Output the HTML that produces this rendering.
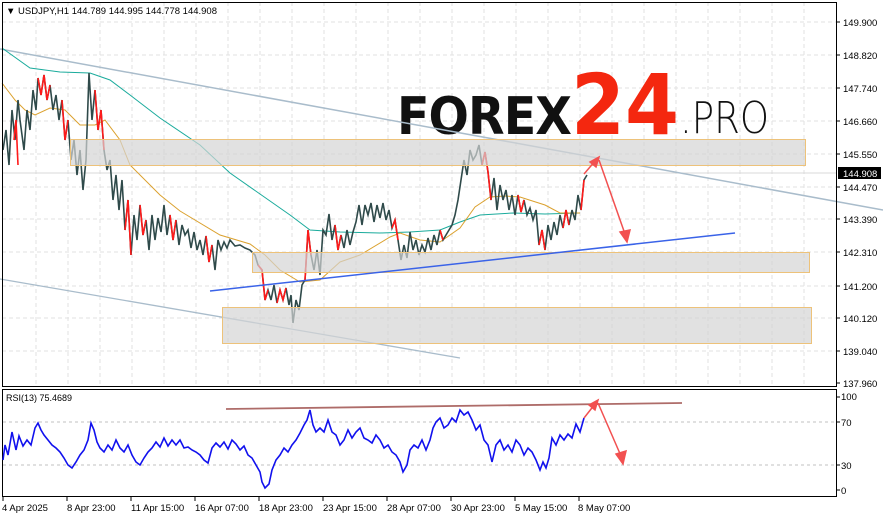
<!DOCTYPE html>
<html><head><meta charset="utf-8"><style>
html,body{margin:0;padding:0;background:#fff;width:883px;height:518px;overflow:hidden}
svg{display:block}
text{font-family:"Liberation Sans",sans-serif}
</style></head><body>
<svg width="883" height="518" viewBox="0 0 883 518" xmlns="http://www.w3.org/2000/svg">
<rect width="883" height="518" fill="#fff"/>
<!-- grid main -->
<g stroke="#e2e2e2" stroke-dasharray="4,3" stroke-width="1">
<line x1="2" y1="22" x2="836" y2="22"/><line x1="2" y1="55" x2="836" y2="55"/><line x1="2" y1="88" x2="836" y2="88"/><line x1="2" y1="121" x2="836" y2="121"/><line x1="2" y1="154" x2="836" y2="154"/><line x1="2" y1="187" x2="836" y2="187"/><line x1="2" y1="219" x2="836" y2="219"/><line x1="2" y1="252" x2="836" y2="252"/><line x1="2" y1="286" x2="836" y2="286"/><line x1="2" y1="318" x2="836" y2="318"/><line x1="2" y1="351" x2="836" y2="351"/>
<line x1="36" y1="2" x2="36" y2="386"/><line x1="68" y1="2" x2="68" y2="386"/><line x1="100" y1="2" x2="100" y2="386"/><line x1="132" y1="2" x2="132" y2="386"/><line x1="164" y1="2" x2="164" y2="386"/><line x1="196" y1="2" x2="196" y2="386"/><line x1="228" y1="2" x2="228" y2="386"/><line x1="260" y1="2" x2="260" y2="386"/><line x1="292" y1="2" x2="292" y2="386"/><line x1="324" y1="2" x2="324" y2="386"/><line x1="356" y1="2" x2="356" y2="386"/><line x1="388" y1="2" x2="388" y2="386"/><line x1="420" y1="2" x2="420" y2="386"/><line x1="452" y1="2" x2="452" y2="386"/><line x1="484" y1="2" x2="484" y2="386"/><line x1="516" y1="2" x2="516" y2="386"/><line x1="548" y1="2" x2="548" y2="386"/><line x1="580" y1="2" x2="580" y2="386"/><line x1="612" y1="2" x2="612" y2="386"/><line x1="644" y1="2" x2="644" y2="386"/><line x1="676" y1="2" x2="676" y2="386"/><line x1="708" y1="2" x2="708" y2="386"/><line x1="740" y1="2" x2="740" y2="386"/><line x1="772" y1="2" x2="772" y2="386"/><line x1="804" y1="2" x2="804" y2="386"/>
</g>
<line x1="2" y1="173" x2="836" y2="173" stroke="#d8d8d8"/>
<!-- logo -->
<text x="397" y="134" font-size="52" font-weight="900" fill="#111" letter-spacing="-1" style="font-family:'DejaVu Sans',sans-serif" textLength="174" lengthAdjust="spacingAndGlyphs">FOREX</text>
<text x="571" y="134" font-size="84" font-weight="900" fill="#f4270f" style="font-family:'DejaVu Sans',sans-serif" textLength="108" lengthAdjust="spacingAndGlyphs">24</text>
<text x="680" y="133" font-size="44" fill="#111" style="font-family:'DejaVu Sans ExtraLight','DejaVu Sans',sans-serif" font-weight="200" textLength="89" lengthAdjust="spacingAndGlyphs">.PRO</text>
<!-- channel lines -->
<line x1="0" y1="49" x2="883" y2="210" stroke="#a9bccb" stroke-width="1.5"/>
<line x1="0" y1="279" x2="460" y2="358" stroke="#a9bccb" stroke-width="1.3"/>
<!-- MAs -->
<polyline fill="none" stroke="#1aab9c" stroke-width="1" points="2,48 30,68 60,72 90,73 110,80 130,95 160,118 200,145 230,173 260,194 290,215 310,230 340,232 380,233 410,232 440,230 460,222 480,215 513,213 545,214 580,213"/>
<polyline fill="none" stroke="#dba12e" stroke-width="1" points="2,83 15,100 25,110 35,115 50,108 65,110 80,125 95,125 105,120 120,140 130,165 160,195 180,211 220,235 250,244 265,255 280,270 300,282 320,280 340,262 360,255 390,237 400,233 420,240 440,242 460,228 475,207 490,197 505,196 520,197 545,205 560,213 580,213"/>
<!-- price -->
<polyline fill="none" stroke="#2f4a4a" stroke-width="1.6" points="3,150 6,130 9,165 12,110 15,140 18,100 20,120 24,150 27,110 30,130 33,90 36,110 38,78 41,95 44,75 47,100 50,85 53,110 56,95 59,120 62,100 65,140 68,120 71,160 74,140 77,175 80,150 83,190 86,160 89,73 92,120 95,90 98,130 101,110 104,150 107,170 110,160 113,200 116,175 119,210 122,180 125,230 128,200 131,255 134,215 137,240 140,205 143,235 146,220 149,250 152,215 155,240 158,218 161,232 164,205 167,235 170,215 173,240 176,220 179,245 182,225 185,235 188,230 191,248 194,232 197,250 200,240 203,255 206,236 209,262 212,245 215,270 218,240 221,250 224,242 227,248 230,240 235,246 240,245 245,248 250,250 255,255 258,265 262,270 265,300 268,290 271,300 274,285 277,303 280,290 283,300 286,288 289,305 291,295 293,323 296,300 299,310 302,285 305,280 308,230 311,255 314,270 317,250 320,275 323,230 326,235 329,214 332,240 335,225 338,250 341,235 344,248 347,230 350,245 353,232 356,222 359,205 362,225 365,205 368,215 371,203 374,222 377,205 380,218 383,203 386,220 389,210 392,228 395,220 398,240 401,260 404,245 407,258 410,232 413,250 416,240 419,255 422,245 425,252 428,238 431,250 434,235 437,245 440,230 443,240 446,235 449,230 452,225 455,215 458,200 461,180 464,160 467,175 470,150 473,160 476,155 479,145 482,165 485,152 488,172 491,200 494,178 497,210 500,185 503,200 506,190 509,210 512,195 515,215 518,195 521,212 524,200 527,215 530,208 533,220 536,210 539,245 542,230 545,250 548,225 551,240 554,222 557,235 560,215 563,228 566,210 569,225 572,210 575,220 578,195 581,210 584,180 587,175"/>
<g stroke="#ff1a1a" stroke-width="1.6" fill="none">
<polyline points="38,78 41,95 44,75 47,100 50,85"/><polyline points="62,100 65,140 68,120"/><polyline points="95,90 98,130 101,110 104,150"/><polyline points="125,230 128,200 131,255"/><polyline points="170,215 173,240 176,220"/><polyline points="206,236 209,262 212,245"/><polyline points="258,265 262,270 265,300 268,290"/><polyline points="277,303 280,290 283,300 286,288"/><polyline points="335,225 338,250 341,235"/><polyline points="392,228 395,220 398,240"/><polyline points="482,165 485,152 488,172 491,200"/><polyline points="518,195 521,212 524,200"/><polyline points="539,245 542,230 545,250"/><polyline points="563,228 566,210 569,225"/><polyline points="581,210 584,180"/><polyline points="14,140 16,120 18,165"/><polyline points="140,205 143,235 146,220"/><polyline points="305,280 308,230 311,255"/><polyline points="440,230 443,240"/>
</g>
<!-- zones -->
<rect x="70.5" y="139.5" width="735" height="26" fill="#d4d4d4" fill-opacity="0.7" stroke="#edc27a"/>
<rect x="252.5" y="252.5" width="557" height="20" fill="#d4d4d4" fill-opacity="0.7" stroke="#edc27a"/>
<rect x="222.5" y="307.5" width="589" height="36" fill="#d4d4d4" fill-opacity="0.7" stroke="#edc27a"/>
<line x1="210" y1="291" x2="735" y2="233" stroke="#3a63e8" stroke-width="1.5"/>
<!-- arrows -->
<g stroke="#f25050" stroke-width="1.5" fill="#f25050">
<line x1="584" y1="174" x2="596" y2="160"/><polygon points="599,157 590,162 596,167"/>
<line x1="599" y1="160" x2="625" y2="234"/><polygon points="627,242 620,232 630,230"/>
</g>
<!-- frame & axes -->
<rect x="2.5" y="2.5" width="834" height="384" fill="none" stroke="#000"/>
<text x="6" y="14" font-size="9.5" fill="#000">▼ USDJPY,H1  144.789 144.995 144.778 144.908</text>
<g font-size="9.5" fill="#000">
<text x="843" y="26">149.900</text><text x="843" y="59">148.820</text><text x="843" y="92">147.740</text><text x="843" y="125">146.660</text><text x="843" y="158">145.550</text><text x="843" y="191">144.470</text><text x="843" y="223">143.390</text><text x="843" y="256">142.310</text><text x="843" y="290">141.200</text><text x="843" y="322">140.120</text><text x="843" y="355">139.040</text><text x="843" y="387">137.960</text>
</g>
<rect x="838" y="167" width="43" height="12" fill="#000"/>
<text x="843" y="177" font-size="9.5" fill="#fff">144.908</text>
<g stroke="#000"><line x1="836" y1="22" x2="840" y2="22"/><line x1="836" y1="55" x2="840" y2="55"/><line x1="836" y1="88" x2="840" y2="88"/><line x1="836" y1="121" x2="840" y2="121"/><line x1="836" y1="154" x2="840" y2="154"/><line x1="836" y1="187" x2="840" y2="187"/><line x1="836" y1="219" x2="840" y2="219"/><line x1="836" y1="252" x2="840" y2="252"/><line x1="836" y1="286" x2="840" y2="286"/><line x1="836" y1="318" x2="840" y2="318"/><line x1="836" y1="351" x2="840" y2="351"/><line x1="836" y1="383" x2="840" y2="383"/></g>
<!-- RSI -->
<rect x="2.5" y="389.5" width="834" height="107" fill="none" stroke="#000"/>
<g stroke="#c0c0c0" stroke-dasharray="3,3"><line x1="3" y1="422" x2="836" y2="422"/><line x1="3" y1="465" x2="836" y2="465"/></g>
<line x1="226" y1="409" x2="682" y2="403" stroke="#a0524f" stroke-width="1.8" stroke-opacity="0.85"/>
<polyline fill="none" stroke="#1111ee" stroke-width="1.6" points="3,460 5,445 8,455 12,432 16,450 19,436 23,446 27,440 31,445 35,428 38,423 41,430 44,435 48,440 52,445 56,448 60,452 64,458 68,465 72,468 76,462 80,455 84,450 88,440 91,423 94,430 97,442 100,448 104,452 108,445 112,450 116,440 120,448 124,452 128,445 132,455 136,462 140,465 144,458 148,452 152,448 156,442 160,447 164,438 168,446 172,440 176,445 180,440 184,448 188,447 192,450 196,452 200,455 204,460 208,463 212,448 216,443 220,447 224,442 228,449 232,440 236,444 240,450 244,446 248,455 252,458 256,465 260,472 262,482 265,488 269,484 272,470 276,460 280,455 284,448 288,452 292,445 296,440 300,433 304,425 307,420 310,410 313,425 316,432 320,428 324,432 328,420 332,432 336,435 340,445 344,440 348,430 352,438 356,432 360,428 364,438 368,440 372,443 376,435 380,440 384,448 388,445 392,452 396,455 400,462 403,472 407,465 410,450 414,445 418,448 422,440 426,450 430,440 433,428 436,422 440,418 444,428 448,425 452,418 456,422 460,410 464,415 468,412 472,420 476,430 480,425 484,440 488,445 492,462 496,445 500,440 504,450 508,445 512,452 516,440 520,445 524,455 528,448 532,452 536,460 540,470 543,462 546,468 549,458 552,438 556,445 560,435 564,440 568,434 572,438 576,424 580,432 584,418"/>
<g stroke="#f25050" stroke-width="1.5" fill="#f25050">
<line x1="584" y1="418" x2="595" y2="404"/><polygon points="598,400 589,405 595,410"/>
<line x1="598" y1="403" x2="621" y2="456"/><polygon points="623,464 616,454 626,451"/>
</g>
<text x="6" y="401" font-size="9" fill="#000">RSI(13) 75.4689</text>
<g font-size="9.5" fill="#000"><text x="841" y="400">100</text><text x="841" y="426">70</text><text x="841" y="469">30</text><text x="841" y="494">0</text></g>
<g stroke="#000"><line x1="836" y1="397" x2="840" y2="397"/><line x1="836" y1="422" x2="840" y2="422"/><line x1="836" y1="465" x2="840" y2="465"/><line x1="836" y1="490" x2="840" y2="490"/></g>
<!-- x axis -->
<g stroke="#000"><line x1="3" y1="497" x2="3" y2="501"/><line x1="67" y1="497" x2="67" y2="501"/><line x1="131" y1="497" x2="131" y2="501"/><line x1="195" y1="497" x2="195" y2="501"/><line x1="259" y1="497" x2="259" y2="501"/><line x1="323" y1="497" x2="323" y2="501"/><line x1="387" y1="497" x2="387" y2="501"/><line x1="451" y1="497" x2="451" y2="501"/><line x1="515" y1="497" x2="515" y2="501"/><line x1="579" y1="497" x2="579" y2="501"/></g>
<g font-size="9.5" fill="#000">
<text x="2" y="511">4 Apr 2025</text><text x="67" y="511">8 Apr 23:00</text><text x="131" y="511">11 Apr 15:00</text><text x="195" y="511">16 Apr 07:00</text><text x="259" y="511">18 Apr 23:00</text><text x="323" y="511">23 Apr 15:00</text><text x="387" y="511">28 Apr 07:00</text><text x="451" y="511">30 Apr 23:00</text><text x="515" y="511">5 May 15:00</text><text x="578" y="511">8 May 07:00</text>
</g>
</svg>
</body></html>
